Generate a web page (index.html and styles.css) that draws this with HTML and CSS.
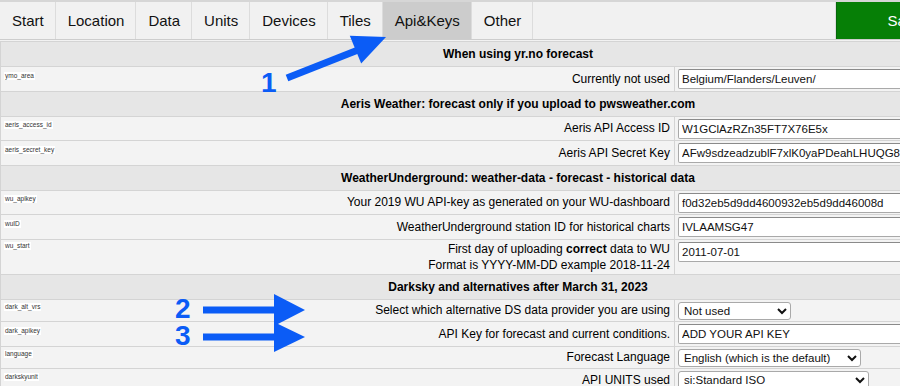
FILE: index.html
```html
<!DOCTYPE html>
<html lang="en">
<head>
  <meta charset="UTF-8">
  <title>Settings - Api&amp;Keys</title>
  <link rel="stylesheet" href="styles.css">
</head>
<body>

  <div class="page">
    <div class="tabs">
      <div class="tab">Start</div>
      <div class="tab">Location</div>
      <div class="tab">Data</div>
      <div class="tab">Units</div>
      <div class="tab">Devices</div>
      <div class="tab">Tiles</div>
      <div class="tab active">Api&amp;Keys</div>
      <div class="tab">Other</div>
      <div class="spacer"></div>
      <div class="save">Save</div>
    </div>

    <table class="settings">
      <tr class="head"><td colspan="2">When using yr.no forecast</td></tr>
      <tr>
        <td class="desc"><span class="key">ymo_area</span>Currently not used</td>
        <td class="val"><input type="text" class="txt" value="Belgium/Flanders/Leuven/"></td>
      </tr>

      <tr class="head"><td colspan="2">Aeris Weather: forecast only if you upload to pwsweather.com</td></tr>
      <tr>
        <td class="desc"><span class="key">aeris_access_id</span>Aeris API Access ID</td>
        <td class="val"><input type="text" class="txt" value="W1GClAzRZn35FT7X76E5x"></td>
      </tr>
      <tr>
        <td class="desc"><span class="key">aeris_secret_key</span>Aeris API Secret Key</td>
        <td class="val"><input type="text" class="txt" value="AFw9sdzeadzublF7xlK0yaPDeahLHUQG89kd"></td>
      </tr>

      <tr class="head"><td colspan="2">WeatherUnderground: weather-data - forecast - historical data</td></tr>
      <tr>
        <td class="desc"><span class="key">wu_apikey</span>Your 2019 WU API-key as generated on your WU-dashboard</td>
        <td class="val"><input type="text" class="txt" value="f0d32eb5d9dd4600932eb5d9dd46008d"></td>
      </tr>
      <tr>
        <td class="desc"><span class="key">wuID</span>WeatherUnderground station ID for historical charts</td>
        <td class="val"><input type="text" class="txt" value="IVLAAMSG47"></td>
      </tr>
      <tr>
        <td class="desc"><span class="key">wu_start</span>First day of uploading <b>correct</b> data to WU<br>Format is YYYY-MM-DD example 2018-11-24</td>
        <td class="val"><input type="text" class="txt" value="2011-07-01"></td>
      </tr>

      <tr class="head"><td colspan="2">Darksky and alternatives after March 31, 2023</td></tr>
      <tr>
        <td class="desc"><span class="key">dark_alt_vrs</span>Select which alternative DS data provider you are using</td>
        <td class="val">
          <select class="sel sel-short"><option>Not used</option></select>
        </td>
      </tr>
      <tr>
        <td class="desc"><span class="key">dark_apikey</span>API Key for forecast and current conditions.</td>
        <td class="val"><input type="text" class="txt" value="ADD YOUR API KEY"></td>
      </tr>
      <tr>
        <td class="desc"><span class="key">language</span>Forecast Language</td>
        <td class="val">
          <select class="sel sel-lang"><option>English (which is the default)</option></select>
        </td>
      </tr>
      <tr>
        <td class="desc"><span class="key">darkskyunit</span>API UNITS used</td>
        <td class="val">
          <select class="sel sel-units"><option>si:Standard ISO</option></select>
        </td>
      </tr>
    </table>

    <!-- annotation arrows drawn over the screenshot -->
    <svg class="marks" width="900" height="386" viewBox="0 0 900 386">
      <line x1="287" y1="78" x2="358" y2="50" stroke="#0b5cf6" stroke-width="7"/>
      <polygon points="349.8,35.7 386,37 361.2,63.5" fill="#0b5cf6"/>
      <text x="261" y="92" class="num">1</text>

      <rect x="203" y="306.5" width="73" height="7" fill="#0b5cf6"/>
      <polygon points="274,294 305,310 274,326" fill="#0b5cf6"/>
      <text x="175" y="318" class="num">2</text>

      <rect x="203" y="333.5" width="73" height="7" fill="#0b5cf6"/>
      <polygon points="274,322 305,337 274,352" fill="#0b5cf6"/>
      <text x="175" y="345" class="num">3</text>
    </svg>
  </div>

</body>
</html>
```

FILE: styles.css
```css
html, body {
  margin: 0;
  height: 100%;
  overflow: hidden;
  background: #f2f2f2;
  font-family: 'Liberation Sans', Arial, sans-serif;
  color: #000;
}

.page {
  position: relative;
  width: 1040px;
}

/* tab bar */
.tabs {
  display: flex;
  width: 972px;
  height: 37px;
  border-top: 2px solid #d6d6d6;
  border-bottom: 1px solid #cdcdcd;
  background: #f1f1f1;
}

.tab {
  display: flex;
  align-items: center;
  padding: 0 11px 0 12px;
  font-size: 15px;
  border-right: 1px solid #dcdcdc;
  color: #111;
}

.tab.active {
  background: #cccccc;
}

.spacer {
  flex: 1;
  border-right: 1px solid #dcdcdc;
}

.save {
  width: 135px;
  display: flex;
  align-items: center;
  justify-content: center;
  background: #067f06;
  color: #fff;
  font-size: 15px;
  border-left: 1px solid #05680a;
}

/* settings table */
.settings {
  width: 1036px;
  margin-top: 1px;
  border-collapse: collapse;
  font-size: 12px;
}

.settings td {
  border: 1px solid #d4d4d4;
  background: #f3f3f3;
}

.settings tr.head td {
  background: #e6e6e6;
  font-weight: bold;
  text-align: center;
  padding: 3px 4px;
  line-height: 18px;
}

.desc {
  width: 666px;
  text-align: right;
  vertical-align: middle;
  padding: 1px 4px 1px 3px;
  line-height: 16px;
  color: #000;
}

.key {
  float: left;
  font-size: 6.5px;
  line-height: 8px;
  margin-top: 1px;
  padding: 0 1px;
  background: #fff;
  color: #333;
}

.val {
  vertical-align: top;
  padding: 2px 3px 1.5px;
}

.txt {
  box-sizing: border-box;
  display: block;
  width: 320px;
  height: 20px;
  margin: 0;
  padding: 0 3px;
  border: 1px solid #a9a9a9;
  border-top-color: #8a8a8a;
  border-radius: 2px;
  background: #fff;
  font-family: 'Liberation Sans', Arial, sans-serif;
  font-size: 11.5px;
  color: #111;
}

.sel {
  box-sizing: border-box;
  display: block;
  height: 18px;
  margin: 0;
  padding: 0 1px;
  border: 1px solid #a9a9a9;
  border-radius: 3px;
  background: #fff;
  font-family: 'Liberation Sans', Arial, sans-serif;
  font-size: 11.5px;
  color: #111;
}

.sel-short { width: 113px; }
.sel-lang { width: 183px; }
.sel-units { width: 191px; }

/* annotations */
.marks {
  position: absolute;
  left: 0;
  top: 0;
  pointer-events: none;
}

.num {
  font-family: 'Liberation Sans', Arial, sans-serif;
  font-weight: bold;
  font-size: 28px;
  fill: #0b5cf6;
}
```
